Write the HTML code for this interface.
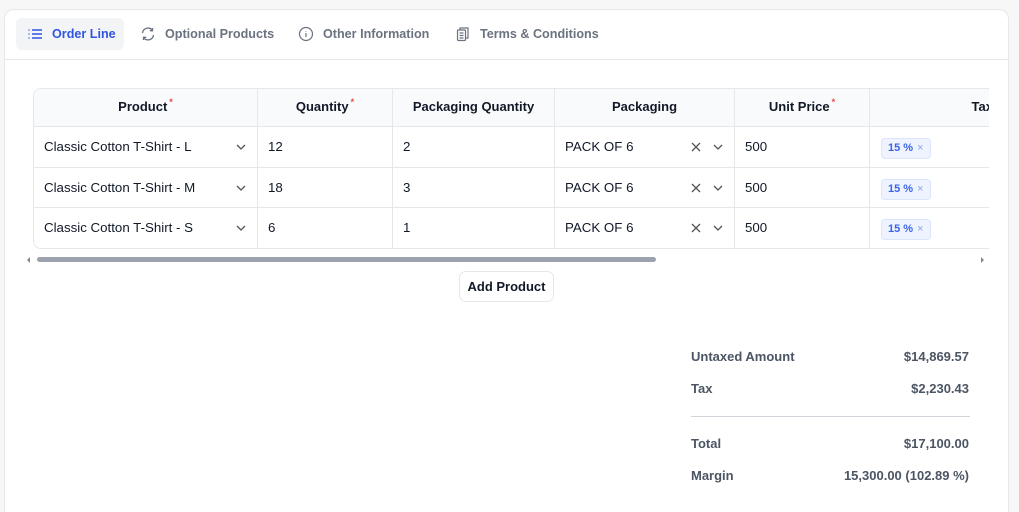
<!DOCTYPE html><html><head><style>
*{box-sizing:border-box;margin:0;padding:0}
html,body{width:1019px;height:512px;overflow:hidden}
body{background:#f7f7f8;font-family:"Liberation Sans",sans-serif;color:#111827;position:relative}
.card{position:absolute;left:4px;top:9px;width:1005px;height:520px;background:#fff;border:1px solid #e5e7eb;border-radius:10px}
.tabs{position:absolute;left:0;top:0;width:100%;height:50px;border-bottom:1px solid #e5e7eb}
.tab{position:absolute;top:8px;height:32px;line-height:32px;font-size:12.6px;font-weight:bold;color:#6b7280}
.tab svg{position:absolute;left:0;top:8px}
.tab span{position:absolute;white-space:nowrap}
.a{background:#f3f4f6;border-radius:6px;color:#2f55e4}
.tbl{position:absolute;left:33px;top:88px;width:956px;height:161px;overflow:hidden;border:1px solid #e5e7eb;border-right:none;border-radius:8px 0 0 8px}
.c{position:absolute;border-right:1px solid #e5e7eb;border-bottom:1px solid #e5e7eb;font-size:13.3px;line-height:40px;padding-left:10px;white-space:nowrap}
.h{background:#f9fafb;font-weight:bold;text-align:center;padding:0;line-height:36px;font-size:13px}
.h i{color:#ef4444;font-style:normal;font-size:9px;vertical-align:top;position:relative;top:-5px;margin-left:2px}
.badge{display:inline-block;height:21px;line-height:19px;border:1px solid #dbe5fb;background:#eef3ff;color:#3b63e6;border-radius:4px;font-size:11px;padding:0 6px;font-weight:bold}
.badge b{color:#8aa0e6;font-weight:normal;margin-left:4px}
.ic{position:absolute;top:14px}
.sum{position:absolute;font-size:13px;font-weight:bold;color:#4b5563}
</style></head><body>
<div class="card">
<div class="tabs">
<div class="tab a" style="left:11px;width:108px"><svg width="16" height="16" viewBox="0 0 16 16" style="left:11px" stroke="#2f55e4" stroke-width="1.5" fill="none"><path d="M5 4h10M5 8h10M5 12h10M1.5 4h1M1.5 8h1M1.5 12h1"/></svg><span style="left:36px">Order Line</span></div>
<div class="tab" style="left:135px"><svg width="16" height="16" viewBox="0 0 16 16" stroke="#6b7280" stroke-width="1.3" fill="none"><path d="M2.5 7a5.5 5.5 0 0 1 10-2.5M13.5 9a5.5 5.5 0 0 1-10 2.5M12.5 2v2.7H9.8M3.5 14v-2.7h2.7"/></svg><span style="left:25px">Optional Products</span></div>
<div class="tab" style="left:293px"><svg width="16" height="16" viewBox="0 0 16 16" stroke="#6b7280" stroke-width="1.2" fill="none"><circle cx="8" cy="8" r="6.5"/><path d="M8 7v4M8 5v.5"/></svg><span style="left:25px">Other Information</span></div>
<div class="tab" style="left:450px"><svg width="16" height="16" viewBox="0 0 16 16" stroke="#6b7280" stroke-width="1.2" fill="none"><rect x="2.5" y="4" width="8" height="10.5" rx="1"/><path d="M5 4V2h8v10h-2.5M4.5 7h4M4.5 9.5h4M4.5 12h4"/></svg><span style="left:25px">Terms &amp; Conditions</span></div>
</div>
</div>
<div class="tbl">
<div class="c h" style="left:0;top:0;width:224px;height:38px">Product<i>*</i></div>
<div class="c h" style="left:224px;top:0;width:135px;height:38px">Quantity<i>*</i></div>
<div class="c h" style="left:359px;top:0;width:162px;height:38px">Packaging Quantity</div>
<div class="c h" style="left:521px;top:0;width:180px;height:38px">Packaging</div>
<div class="c h" style="left:701px;top:0;width:135px;height:38px">Unit Price<i>*</i></div>
<div class="c h" style="left:836px;top:0;width:240px;height:38px">Taxes</div>
</div>
<div style="position:absolute;left:28px;top:256px;width:960px;height:6px">
<div style="position:absolute;left:9px;top:1px;width:619px;height:5px;background:#9ca3af;border-radius:3px"></div>
<div style="position:absolute;left:-1px;top:1px;border:3px solid transparent;border-right:3px solid #888;border-left:none"></div>
<div style="position:absolute;left:953px;top:1px;border:3px solid transparent;border-left:3px solid #888;border-right:none"></div>
</div>
<div style="position:absolute;left:459px;top:271px;width:95px;height:31px;border:1px solid #e5e7eb;border-radius:7px;font-size:13px;font-weight:bold;line-height:29px;text-align:center">Add Product</div>
<div class="sum" style="left:691px;top:349px">Untaxed Amount</div><div class="sum" style="right:50px;top:349px">$14,869.57</div>
<div class="sum" style="left:691px;top:381px">Tax</div><div class="sum" style="right:50px;top:381px">$2,230.43</div>
<div style="position:absolute;left:691px;top:416px;width:279px;height:1px;background:#d1d5db"></div>
<div class="sum" style="left:691px;top:436px">Total</div><div class="sum" style="right:50px;top:436px">$17,100.00</div>
<div class="sum" style="left:691px;top:468px">Margin</div><div class="sum" style="right:50px;top:468px">15,300.00 (102.89 %)</div>
<script>
var d=[["Classic Cotton T-Shirt - L","12","2"],["Classic Cotton T-Shirt - M","18","3"],["Classic Cotton T-Shirt - S","6","1"]],h="";
var chev='<svg class="ic" width="12" height="12" viewBox="0 0 12 12" style="right:RRpx" stroke="#555" stroke-width="1.3" fill="none"><path d="M2 4l4 4 4-4"/></svg>';
var x='<svg class="ic" width="12" height="12" viewBox="0 0 12 12" style="right:32px" stroke="#555" stroke-width="1.3" fill="none"><path d="M2 2l8 8M10 2l-8 8"/></svg>';
d.forEach(function(r,i){var t=38+i*40.5,hh=i==2?41:40.5;
h+='<div class="c" style="left:0;top:'+t+'px;width:224px;height:'+hh+'px">'+r[0]+chev.replace('RR','10')+'</div>';
h+='<div class="c" style="left:224px;top:'+t+'px;width:135px;height:'+hh+'px">'+r[1]+'</div>';
h+='<div class="c" style="left:359px;top:'+t+'px;width:162px;height:'+hh+'px">'+r[2]+'</div>';
h+='<div class="c" style="left:521px;top:'+t+'px;width:180px;height:'+hh+'px">PACK OF 6'+x+chev.replace('RR','10')+'</div>';
h+='<div class="c" style="left:701px;top:'+t+'px;width:135px;height:'+hh+'px">500</div>';
h+='<div class="c" style="left:836px;top:'+t+'px;width:240px;height:'+hh+'px;padding-left:11px"><span class="badge">15 %<b>×</b></span></div>';});
document.querySelector('.tbl').innerHTML+=h;
</script>
</body></html>
